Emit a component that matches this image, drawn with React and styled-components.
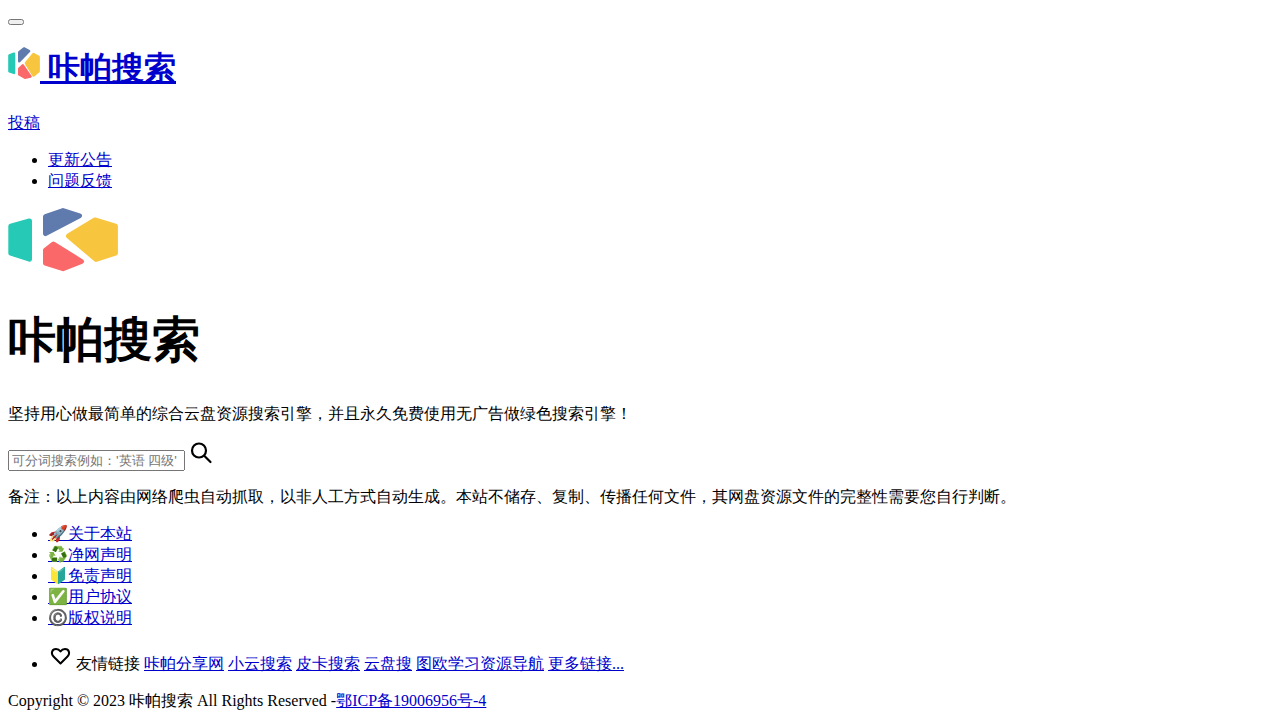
import styled, { createGlobalStyle } from "styled-components";

const Global = createGlobalStyle`
  body {
    margin: 8px;
    background: #fff;
    color: #000;
    font-family: "Liberation Serif", serif;
    font-size: 16px;
  }
  a { color: #0000cc; }
`;

const Toggle = styled.button``;

const Brand = styled.h1`
  font-size: 32px;
  margin: 21.44px 0;
`;

const Links = styled.ul`
  margin: 16px 0;
  padding-left: 40px;
`;

const Title = styled.h1`
  font-size: 48px;
  margin: 32px 0;
`;

const Text = styled.p`
  margin: 16px 0;
`;

const SearchInput = styled.input`
  width: 169px;
`;

const Row = styled.div``;

const SmallLogo = () => (
  <svg width="32" height="32" viewBox="0 0 32 32" strokeLinejoin="round" strokeWidth="2.6">
    <path d="M6 6.8 L1.5 8.4 V24.2 L6 25.8 Z" fill="#26c9b5" stroke="#26c9b5" />
    <path d="M11.3 5.3 L16 1.5 L21 4.2 L11.3 14.2 Z" fill="#5f7aad" stroke="#5f7aad" />
    <path d="M18 16.2 L25.5 7.2 L30.6 10 V24.2 L25.5 28.4 Z" fill="#f8c53e" stroke="#f8c53e" />
    <path d="M14.8 18.4 L22.4 29.4 L17 30.7 L11.3 27.4 V21.6 Z" fill="#fb6869" stroke="#fb6869" />
  </svg>
);

const BigLogo = () => (
  <svg width="110" height="64" viewBox="0 0 110 64" strokeLinejoin="round" strokeWidth="5">
    <path d="M21.5 13 L2.8 18.2 V45.2 L21.5 51.2 Z" fill="#26c9b5" stroke="#26c9b5" />
    <path d="M37.5 8.7 L55 2.6 L71.5 7.8 L37.5 25.6 Z" fill="#5f7aad" stroke="#5f7aad" />
    <path d="M60.5 28 L87 12 L107.4 18.2 V45.2 L88 51.4 Z" fill="#f8c53e" stroke="#f8c53e" />
    <path d="M45.5 36 L73.5 53.5 L55 60.7 L37.5 55.2 V42.2 Z" fill="#fb6869" stroke="#fb6869" />
  </svg>
);

const SearchIcon = () => (
  <svg width="24" height="24" viewBox="0 0 24 24" fill="none" stroke="#000" strokeWidth="2.2" strokeLinecap="round">
    <circle cx="10" cy="9.5" r="7" />
    <path d="M15.5 15 L21.5 21" />
  </svg>
);

const HeartIcon = () => (
  <svg width="24" height="24" viewBox="0 0 24 24" fill="none" stroke="#000" strokeWidth="2" strokeLinejoin="round">
    <path d="M12.5 18.5 L5.5 11.5 C2.5 8.5 4 4 8 4 C10 4 11.5 5 12.5 6.5 C13.5 5 15 4 17 4 C21 4 22.5 8.5 19.5 11.5 Z" />
  </svg>
);

export default function App() {
  return (
    <>
      <Global />
      <nav>
        <Row>
          <Toggle />
        </Row>
        <Brand>
          <a href="#">
            <SmallLogo /> 咔帕搜索
          </a>
        </Brand>
        <Row>
          <a href="#">投稿</a>
        </Row>
        <Links>
          <li><a href="#">更新公告</a></li>
          <li><a href="#">问题反馈</a></li>
        </Links>
      </nav>
      <main>
        <Row>
          <BigLogo />
        </Row>
        <Title>咔帕搜索</Title>
        <Text>坚持用心做最简单的综合云盘资源搜索引擎，并且永久免费使用无广告做绿色搜索引擎！</Text>
        <form>
          <SearchInput placeholder="可分词搜索例如：'英语 四级'" /> <SearchIcon />
        </form>
        <Text>备注：以上内容由网络爬虫自动抓取，以非人工方式自动生成。本站不储存、复制、传播任何文件，其网盘资源文件的完整性需要您自行判断。</Text>
      </main>
      <footer>
        <Links>
          <li><a href="#">🚀关于本站</a></li>
          <li><a href="#">♻️净网声明</a></li>
          <li><a href="#">🔰免责声明</a></li>
          <li><a href="#">✅用户协议</a></li>
          <li><a href="#">©️版权说明</a></li>
        </Links>
        <Links>
          <li>
            <HeartIcon /> 友情链接 <a href="#">咔帕分享网</a> <a href="#">小云搜索</a> <a href="#">皮卡搜索</a> <a href="#">云盘搜</a> <a href="#">图欧学习资源导航</a> <a href="#">更多链接...</a>
          </li>
        </Links>
        <Row>
          Copyright © 2023 咔帕搜索 All Rights Reserved -<a href="#">鄂ICP备19006956号-4</a>
        </Row>
      </footer>
    </>
  );
}
